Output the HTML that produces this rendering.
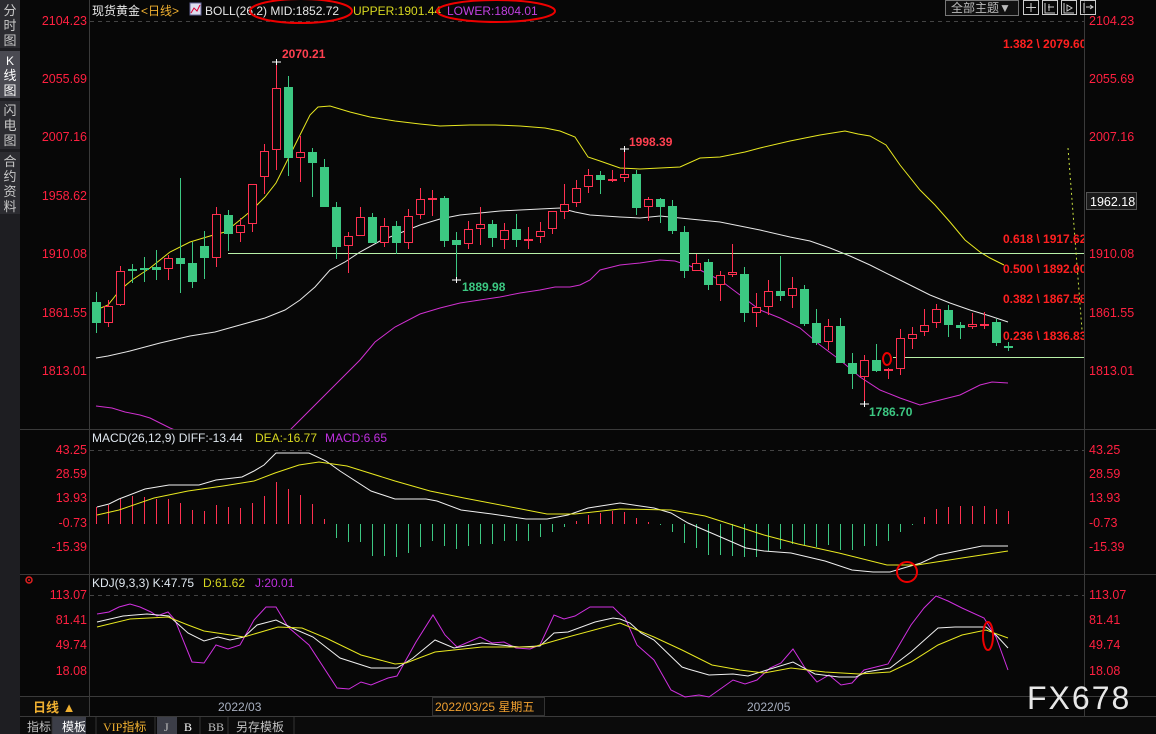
<!DOCTYPE html>
<html><head><meta charset="utf-8">
<style>
html,body{margin:0;padding:0;background:#070707;width:1156px;height:734px;overflow:hidden;font-family:"Liberation Sans","Noto Sans CJK SC",sans-serif}
svg{position:absolute;left:0;top:0}
</style></head><body>
<svg id="s" width="1156" height="734" viewBox="0 0 1156 734" xmlns="http://www.w3.org/2000/svg" font-family="Liberation Sans, Noto Sans CJK SC, sans-serif">
<rect width="1156" height="734" fill="#070707"/>
<rect x="0" y="0" width="20" height="734" fill="#1e1e22"/>
<rect x="0" y="0" width="20" height="48" fill="#2c2c31"/>
<rect x="0" y="51" width="20" height="47" fill="#4a4a52"/>
<rect x="0" y="101" width="20" height="48" fill="#2c2c31"/>
<rect x="0" y="152" width="20" height="62" fill="#2c2c31"/>
<g fill="#c8c8c8" font-size="13" text-anchor="middle">
<text x="10" y="15">分</text><text x="10" y="30">时</text><text x="10" y="45">图</text>
<text x="10" y="65" fill="#fff" font-size="12">K</text><text x="10" y="80" fill="#fff">线</text><text x="10" y="95" fill="#fff">图</text>
<text x="10" y="115">闪</text><text x="10" y="130">电</text><text x="10" y="145">图</text>
<text x="10" y="166">合</text><text x="10" y="181">约</text><text x="10" y="196">资</text><text x="10" y="211">料</text>
</g>
<line x1="89.5" y1="0" x2="89.5" y2="716" stroke="#3a3a3a"/>
<line x1="1084.5" y1="0" x2="1084.5" y2="716" stroke="#3a3a3a"/>
<line x1="20" y1="429.5" x2="1156" y2="429.5" stroke="#3a3a3a"/>
<line x1="20" y1="574.5" x2="1156" y2="574.5" stroke="#3a3a3a"/>
<line x1="20" y1="696.5" x2="1156" y2="696.5" stroke="#3a3a3a"/>
<line x1="20" y1="716.5" x2="1156" y2="716.5" stroke="#3a3a3a"/>
<g stroke="#444" stroke-dasharray="4 4">
<line x1="90" y1="21.5" x2="1084" y2="21.5"/>
<line x1="90" y1="450.5" x2="1084" y2="450.5"/>
<line x1="90" y1="595.5" x2="1084" y2="595.5"/>
</g>
<text x="92" y="15" font-size="12" fill="#e8e8e8">现货黄金</text>
<text x="141" y="15" font-size="12" fill="#f0b030">&lt;日线&gt;</text>
<rect x="190" y="3" width="11" height="12" fill="#dde" stroke="#669"/>
<polyline points="191,13 194,8 197,11 200,5" fill="none" stroke="#d03" stroke-width="1"/>
<text x="205" y="15" font-size="12" fill="#e8e8e8">BOLL(26,2) MID:1852.72</text>
<text x="353" y="15" font-size="12" fill="#d8d820">UPPER:1901.44</text>
<text x="447" y="15" font-size="12" fill="#c040e0">LOWER:1804.01</text>
<ellipse cx="301" cy="11" rx="51" ry="12" fill="none" stroke="#e00" stroke-width="2"/>
<ellipse cx="496" cy="11" rx="59" ry="11" fill="none" stroke="#e00" stroke-width="2"/>
<rect x="945.5" y="0.5" width="73" height="15" fill="#111" stroke="#777"/>
<text x="951" y="12" font-size="12" fill="#bbb">全部主题▼</text>
<g fill="none" stroke="#ccc">
<rect x="1023.5" y="0.5" width="15" height="14"/><rect x="1042.5" y="0.5" width="15" height="14"/>
<rect x="1061.5" y="0.5" width="15" height="14"/><rect x="1080.5" y="0.5" width="15" height="14"/>
<path d="M1031 3v9M1026 7.5h10M1045 3v10h10M1049 4v7M1048 7h6M1064 3v10h10M1067 5l5 3-5 3zM1084 3v10M1086 7h7M1090 5l3 2-3 2"/>
</g>
<g font-size="12.5" fill="#ff2040" text-anchor="end">
<text x="87" y="25">2104.23</text><text x="87" y="83">2055.69</text><text x="87" y="141">2007.16</text>
<text x="87" y="200">1958.62</text><text x="87" y="258">1910.08</text><text x="87" y="317">1861.55</text><text x="87" y="375">1813.01</text>
<text x="87" y="454">43.25</text><text x="87" y="478">28.59</text><text x="87" y="502">13.93</text><text x="87" y="527">-0.73</text><text x="87" y="551">-15.39</text>
<text x="87" y="599">113.07</text><text x="87" y="624">81.41</text><text x="87" y="649">49.74</text><text x="87" y="675">18.08</text>
</g>
<g font-size="12.5" fill="#ff2040">
<text x="1089" y="25">2104.23</text><text x="1089" y="83">2055.69</text><text x="1089" y="141">2007.16</text>
<text x="1089" y="258">1910.08</text><text x="1089" y="317">1861.55</text><text x="1089" y="375">1813.01</text>
<text x="1089" y="454">43.25</text><text x="1089" y="478">28.59</text><text x="1089" y="502">13.93</text><text x="1089" y="527">-0.73</text><text x="1089" y="551">-15.39</text>
<text x="1089" y="599">113.07</text><text x="1089" y="624">81.41</text><text x="1089" y="649">49.74</text><text x="1089" y="675">18.08</text>
</g>
<rect x="1086.5" y="192.5" width="50" height="17" fill="#1a1a1a" stroke="#555"/>
<text x="1090" y="206" font-size="12.5" fill="#fff">1962.18</text>
<clipPath id="main"><rect x="90" y="22" width="994" height="407"/></clipPath>
<g id="mainG" clip-path="url(#main)"></g>
<g id="macdG"></g>
<g id="kdjG"></g>
<clipPath id="fc"><rect x="900" y="22" width="184" height="400"/></clipPath>
<g clip-path="url(#fc)" font-size="12" font-weight="bold" fill="#ff2020">
<text x="1003" y="48">1.382 \ 2079.60</text>
<text x="1003" y="243">0.618 \ 1917.62</text>
<text x="1003" y="273">0.500 \ 1892.00</text>
<text x="1003" y="303">0.382 \ 1867.58</text>
<text x="1003" y="340">0.236 \ 1836.83</text>
</g>
<text x="282" y="58" font-size="12" font-weight="bold" fill="#ff4050">2070.21</text>
<text x="629" y="146" font-size="12" font-weight="bold" fill="#ff4050">1998.39</text>
<text x="462" y="291" font-size="12" font-weight="bold" fill="#3cc882">1889.98</text>
<text x="869" y="416" font-size="12" font-weight="bold" fill="#3cc882">1786.70</text>
<text x="92" y="442" font-size="12" fill="#e0e8f0">MACD(26,12,9) DIFF:-13.44</text>
<text x="255" y="442" font-size="12" fill="#d8d820">DEA:-16.77</text>
<text x="325" y="442" font-size="12" fill="#c030e0">MACD:6.65</text>
<text x="92" y="587" font-size="12" fill="#e0e8f0">KDJ(9,3,3) K:47.75</text>
<text x="203" y="587" font-size="12" fill="#d8d820">D:61.62</text>
<text x="255" y="587" font-size="12" fill="#c030e0">J:20.01</text>
<circle cx="29" cy="580" r="3" fill="none" stroke="#e02020" stroke-width="1.5"/>
<circle cx="29" cy="580" r="1" fill="#e02020"/>
<rect x="20" y="697" width="69" height="19" fill="#0c0c0c"/>
<text x="33" y="712" font-size="13" font-weight="bold" fill="#f0b030">日线 ▲</text>
<text x="218" y="711" font-size="12" fill="#a8b0c0">2022/03</text>
<rect x="432.5" y="697.5" width="112" height="18" fill="#0c0c0c" stroke="#333"/>
<text x="435" y="711" font-size="12" fill="#f0a030">2022/03/25 星期五</text>
<text x="747" y="711" font-size="12" fill="#a8b0c0">2022/05</text>
<text x="1027" y="709" font-size="32" fill="#e8e8e8" letter-spacing="2">FX678</text>
<rect x="20" y="717" width="1136" height="17" fill="#0b0b0b"/>
<rect x="52" y="717" width="34" height="17" fill="#3c3e48"/>
<rect x="157" y="717" width="20" height="17" fill="#3c3e48"/>
<g font-size="12" fill="#c0c0c0">
<text x="27" y="731">指标</text><text x="62" y="731" fill="#fff">模板</text>
<text x="103" y="731" fill="#f0b030" font-family="Liberation Serif, Noto Sans CJK SC, serif">VIP指标</text>
<text x="164" y="731" font-family="Liberation Serif, serif">J</text>
<text x="184" y="731" fill="#fff" font-family="Liberation Serif, serif">B</text>
<text x="208" y="731" font-family="Liberation Serif, serif">BB</text>
<text x="236" y="731">另存模板</text>
</g>
<g stroke="#333"><line x1="52" y1="717" x2="52" y2="734"/><line x1="96" y1="717" x2="96" y2="734"/><line x1="155" y1="717" x2="155" y2="734"/><line x1="200" y1="717" x2="200" y2="734"/><line x1="228" y1="717" x2="228" y2="734"/><line x1="294" y1="717" x2="294" y2="734"/></g>
</svg>
<script>
var NS="http://www.w3.org/2000/svg";
function el(p,t,a){var e=document.createElementNS(NS,t);for(var k in a)e.setAttribute(k,a[k]);p.appendChild(e);return e;}
var M=document.getElementById("mainG"),MC=document.getElementById("macdG"),K=document.getElementById("kdjG");
var RED="#ff3050",GRN="#3cc882";
var C=[
[96,302,323,292,333,'g'],[108,306,323,300,327,'r'],[120,271,305,266,306,'r'],[132,269,271,264,283,'g'],[144,268,270,257,282,'g'],
[156,267,270,250,280,'g'],[168,258,269,255,280,'r'],[180,258,264,178,293,'g'],[192,263,282,242,288,'g'],[204,246,258,231,279,'g'],
[216,214,258,207,267,'r'],[228,215,234,210,251,'g'],[240,225,233,218,242,'r'],[252,184,224,184,232,'r'],[264,151,177,144,194,'r'],
[276,88,150,62,170,'r'],[288,87,158,76,176,'g'],[300,152,158,136,182,'r'],[312,152,163,148,197,'g'],[324,167,207,159,207,'g'],
[336,207,247,202,259,'g'],[348,236,246,232,273,'r'],[360,217,236,207,236,'r'],[372,217,243,213,243,'g'],[384,226,243,218,247,'r'],
[396,226,243,221,254,'g'],[408,216,243,209,249,'r'],[420,199,215,188,219,'r'],[432,198,199,190,216,'r'],[444,198,241,196,247,'g'],
[456,240,245,232,279,'g'],[468,229,244,221,249,'r'],[480,224,229,207,245,'r'],[492,224,238,220,247,'g'],[504,230,240,223,249,'r'],
[516,229,240,214,247,'g'],[528,239,239,227,249,'r'],[540,231,237,222,243,'r'],[552,211,229,211,234,'r'],[564,204,212,184,219,'r'],
[576,188,203,180,207,'r'],[588,175,187,169,193,'r'],[600,175,180,171,194,'g'],[612,179,179,170,182,'r'],[624,174,178,149,182,'r'],
[636,174,208,170,215,'g'],[648,199,207,197,221,'r'],[660,199,207,198,223,'g'],[672,206,231,200,234,'g'],[684,232,271,226,278,'g'],
[696,263,271,254,271,'r'],[708,262,285,259,290,'g'],[720,275,285,271,301,'r'],[732,272,275,244,277,'r'],[744,274,313,267,322,'g'],
[756,307,313,293,327,'r'],[768,291,307,280,315,'r'],[780,291,296,256,301,'g'],[792,288,296,277,308,'r'],[804,289,324,285,326,'g'],
[816,323,343,309,345,'g'],[828,326,342,319,350,'r'],[840,326,363,318,363,'g'],[852,363,374,353,389,'g'],[864,360,377,355,404,'r'],
[876,360,371,344,372,'g'],[888,369,371,368,379,'r'],[900,338,369,329,375,'r'],[912,334,339,327,349,'r'],[924,325,332,309,336,'r'],
[936,309,323,304,328,'r'],[948,310,325,305,337,'g'],[960,325,328,322,339,'g'],[972,324,327,313,329,'r'],[984,324,325,312,329,'r'],
[996,322,343,319,346,'g'],[1008,346,346,342,351,'g']];
function pl(p,pts,col,extra){var a={points:pts,fill:"none",stroke:col,"stroke-width":1};for(var k in extra)a[k]=extra[k];el(p,"polyline",a);}
pl(M,"96,310 108,305 120,290 132,280 150,268 170,252 190,242 210,236 225,232 240,220 252,210 265,197 276,183 290,155 300,135 310,115 318,107 330,106 350,112 370,117 395,121 420,124 440,126 470,125 495,125 520,126 545,128 560,131 575,137 588,157 600,161 620,168 640,169 660,168 680,167 700,158 720,157 745,152 760,148 790,141 820,135 845,131 858,134 870,136 886,145 900,165 920,190 935,205 950,222 965,240 980,252 990,258 1004,265","#e8e820");
pl(M,"96,358 108,356 130,351 160,343 190,336 215,332 240,325 265,318 285,310 300,300 315,287 330,270 345,262 360,252 380,241 400,233 420,225 440,219 460,215 480,213 500,211 520,210 540,209 560,208 575,212 590,215 620,217 640,218 660,216 680,218 700,220 720,222 740,226 760,230 790,237 810,241 830,248 850,256 870,265 890,275 910,285 930,295 950,303 970,310 990,316 1008,322","#e8e8e8");
pl(M,"96,406 112,408 125,412 140,415 150,418 170,428 200,440 280,440 290,430 300,420 320,400 340,380 360,360 375,342 395,327 420,314 440,308 460,303 480,300 500,297 520,293 540,290 555,287 570,287 580,285 590,280 600,270 620,265 640,263 660,260 675,261 690,266 700,270 720,280 740,295 760,310 780,318 800,328 820,345 840,360 860,377 880,390 900,398 920,405 940,400 960,395 980,385 992,382 1008,383","#d030d0");
el(M,"line",{x1:228,y1:253.5,x2:1084,y2:253.5,stroke:"#b8f0a8"});
el(M,"line",{x1:893,y1:357.5,x2:1084,y2:357.5,stroke:"#b8f0a8"});
el(M,"line",{x1:1068,y1:148,x2:1082,y2:330,stroke:"#c8e040","stroke-dasharray":"2 3"});
C.forEach(function(c){var col=c[5]=='r'?RED:GRN,x=c[0];
 el(M,"line",{x1:x+.5,y1:c[3],x2:x+.5,y2:c[4],stroke:col});
 var h=c[2]-c[1];
 if(h<2){el(M,"rect",{x:x-4,y:c[1],width:9,height:2,fill:col});}
 else if(c[5]=='r'){el(M,"rect",{x:x-3.5,y:c[1]+.5,width:8,height:h-1,fill:"#070707",stroke:col});}
 else el(M,"rect",{x:x-4,y:c[1],width:9,height:h,fill:col});
});
[[276,62],[624,149],[456,280],[864,404]].forEach(function(p){el(M,"path",{d:"M"+(p[0]-4)+" "+p[1]+"h9M"+(p[0]+.5)+" "+(p[1]-3)+"v6",stroke:"#fff"});});
el(M,"ellipse",{cx:887,cy:359,rx:4,ry:6,fill:"none",stroke:"#e00","stroke-width":2});
var mb=[507,505,499,496,497,499,499,503,510,511,505,507,508,503,496,482,489,495,504,519,
538,542,542,556,556,557,553,547,541,546,549,546,544,544,541,541,541,537,532,527,
521,515,513,511,512,518,522,
525,532,543,548,555,555,556,557,557,551,549,544,545,547,545,550,550,546,546,541,532,525,
517,509,507,506,506,506,509,511];
var z=524;
mb.forEach(function(v,i){var x=C[i][0]+.5;var col=v<z?RED:GRN;el(MC,"line",{x1:x,y1:z,x2:x,y2:v,stroke:col});});
pl(MC,"97,507 109,504 119,499 145,489 169,485 199,485 216,480 242,477 254,471 264,465 276,453 309,453 326,461 340,471 371,491 395,499 426,499 437,501 461,510 492,514 526,519 547,519 568,515 588,508 620,503 654,508 671,513 688,523 716,535 746,548 764,551 791,553 825,561 852,570 873,572 890,572 907,567 921,563 938,555 982,546 1008,546","#f0f0f0");
pl(MC,"97,515 119,510 154,498 188,491 223,486 254,481 275,473 299,465 319,462 347,466 395,481 430,491 464,498 516,508 547,514 575,514 620,509 671,510 705,516 733,525 764,535 798,544 839,553 887,565 917,565 962,558 1008,551","#e8e820");
el(MC,"circle",{cx:907,cy:572,r:10,fill:"none",stroke:"#e00","stroke-width":2});
pl(K,"97,614 109,612 119,607 130,604 140,607 151,612 157,616 168,612 175,620 192,662 204,663 216,645 228,649 240,645 254,620 266,607 276,607 288,627 309,645 337,688 349,689 361,682 371,685 388,678 397,676 416,642 433,615 445,635 457,647 480,637 492,643 504,642 516,648 530,649 540,645 554,615 564,619 575,616 590,607 613,607 620,614 625,618 637,645 654,660 671,690 685,697 699,695 709,697 733,680 745,684 757,680 770,668 781,663 793,649 805,668 817,682 829,675 841,685 852,683 864,670 888,664 911,625 924,608 936,596 948,601 962,608 984,618 996,637 1008,670","#d030e0");
pl(K,"97,622 123,616 147,614 169,616 188,633 204,641 218,637 230,640 244,637 257,625 276,620 292,628 313,637 340,658 371,668 397,668 413,658 435,640 454,648 482,643 519,647 540,646 554,633 568,632 595,622 613,618 620,619 630,623 641,633 654,640 682,667 688,669 709,675 733,674 748,676 767,670 793,662 815,674 839,677 856,677 866,672 890,668 911,652 938,628 955,627 986,627 996,635 1008,648","#f0f0f0");
pl(K,"97,627 130,619 168,617 188,625 204,631 244,637 278,627 302,628 326,638 361,655 395,664 406,663 435,652 482,647 533,647 568,637 620,623 654,637 682,650 712,665 740,670 764,673 791,668 825,672 859,674 890,672 911,662 938,645 962,635 986,630 1008,638","#e8e820");
el(K,"ellipse",{cx:988,cy:636,rx:5,ry:14,fill:"none",stroke:"#e00","stroke-width":2});
</script>
</body></html>
